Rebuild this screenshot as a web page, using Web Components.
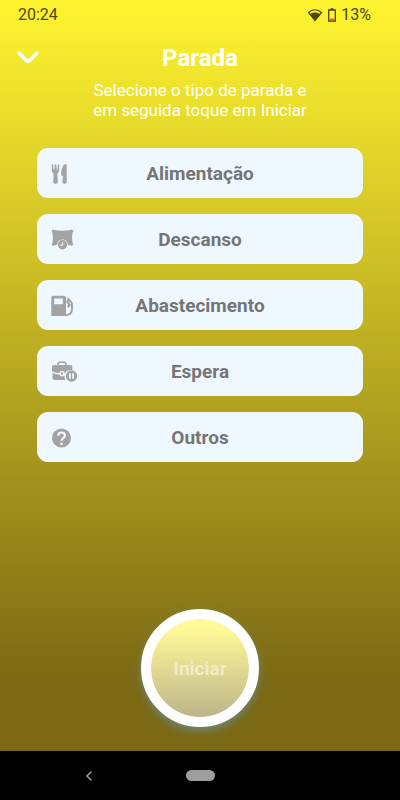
<!DOCTYPE html>
<html lang="pt-BR">
<head>
<meta charset="utf-8">
<meta name="viewport" content="width=device-width, initial-scale=1">
<title>Parada</title>
<style>
  body {
    margin: 0;
    font-family: Roboto, "Liberation Sans", sans-serif;
  }
</style>
</head>
<body>
<stop-screen>
  <status-bar slot="status" data-time="20:24" data-battery="13%"></status-bar>
  <page-header data-title="Parada">Selecione o tipo de parada e<br>em seguida toque em Iniciar</page-header>
  <stop-list>
    <stop-option data-icon="food">Alimentação</stop-option>
    <stop-option data-icon="rest">Descanso</stop-option>
    <stop-option data-icon="fuel">Abastecimento</stop-option>
    <stop-option data-icon="wait">Espera</stop-option>
    <stop-option data-icon="other">Outros</stop-option>
  </stop-list>
  <start-button>Iniciar</start-button>
  <nav-bar slot="nav"></nav-bar>
</stop-screen>

<script>
const icons = {
  food: `
    <path d="M.8 2v5.600c0 1.600.8 2.300 1.800 2.800L2.200 19c0 2.400 4.600 2.400 4.600 0l-.4-8.600c1-.5 1.800-1.200 1.800-2.800V2c0-.9-1.300-.9-1.400 0l-.2 4.500h-.9L5.400 2c0-.9-1.700-.9-1.800 0l-.2 4.500h-1L2.200 2C2.100 1.100.8 1.100.8 2z"/>
    <path d="M15.700 1.600V19c0 2.200-4.300 2.200-4.300 0l.5-5.700c-1.200-.6-2-1.400-1.800-3 .3-4 1.500-8.200 4.400-9.300.7-.3 1.200 0 1.200.6z"/>`,
  rest: `
    <path d="M1 1.500c.7-1 1.500-1.200 2.200-.4 5 1 11.600 1 16.600 0 .7-.8 1.500-.6 2.200.4.600.7.400 1.300-.3 1.700-.8 4-.8 7.500 0 11.200.7.500.8 1.200.2 1.700-.7.800-1.500.8-2.300.1l-2.700-.4C16.300 8.600 6.700 8.600 6.100 15.800l-2.700.4c-.8.700-1.600.7-2.300-.1-.6-.5-.5-1.200.2-1.700.8-3.700.8-7.200 0-11.200C.6 2.800.400 2.200 1 1.500z"/>
    <circle cx="11.500" cy="15.800" r="4.700"/>
    <path d="M11.500 13.200v3H9.200" fill="none" stroke="aliceblue" stroke-width="1.100"/>`,
  fuel: `
    <path fill-rule="evenodd" d="M2 .8h11c1.300 0 2 .7 2 2V21H.3V2.800C.3 1.500.8.800 2 .8zM3.200 3.600v5.700h8.600V3.600z"/>
    <path d="M15 20c3.700 0 6-2.300 6-6V9.500c0-1.100-.3-1.900-1-2.600L16.400 3.300" fill="none" stroke="currentColor" stroke-width="2"/>
    <path d="M17 5l-.4 2.500 2 2.500-2 2.300" fill="none" stroke="currentColor" stroke-width="2.200"/>`,
  wait: `
    <path d="M7 4V3c0-1 .8-1.800 1.800-1.800h4.400C14.200 1.200 15 2 15 3v1" fill="none" stroke="currentColor" stroke-width="1.600"/>
    <path d="M3 4h16c1.500 0 2.300.8 2.300 2v3.200c-3.400-.4-6 .8-7 2.800h-.8c-.2-1.400-1-2-2.500-2s-2.300.6-2.500 2C5.500 11.900 3 11.300 1 10.200V6c0-1.200.7-2 2-2z"/>
    <path d="M1.500 12c2 .9 4.300 1.400 7 1.500.3 1.300 1.200 2 2.500 2s2-.4 2.400-1.200c-.1 1.700.2 3.300 1.200 4.700H3.300c-1.200 0-1.800-.7-1.800-1.700z"/>
    <rect x="10" y="11" width="2" height="3" rx="1"/>
    <circle cx="20.500" cy="15" r="5.700"/>
    <path d="M18.900 12.300v5.400M22.100 12.300v5.400" stroke="aliceblue" stroke-width="1.900"/>`,
  other: `
    <circle cx="10.500" cy="11" r="9.500"/>
    <path d="M7.300 8.700c0-2 1.400-3.200 3.300-3.200s3.300 1.200 3.300 3c0 2.500-3.200 2.600-3.200 5.200" fill="none" stroke="aliceblue" stroke-width="2.200"/>
    <circle cx="10.600" cy="16.800" r="1.400" fill="aliceblue"/>`
};

// Clones the markup of a component into its open shadow root
function attachTemplate(element, html)
{
  const template = document.createElement("template");
  template.innerHTML = html;
  element.attachShadow({mode: "open"}).append(template.content.cloneNode(true));
}

class StopScreen extends HTMLElement
{
  constructor()
  {
    super();

    //language=HTML
    attachTemplate(this, `
      <style>
        :host {
          display: flex;
          flex-direction: column;
          min-height: 100vh;
        }

        main {
          flex: 1;
          display: flex;
          flex-direction: column;
          background: linear-gradient(#fff430, #7b6914 91%);
        }
      </style>
      <main>
        <slot name="status"></slot>
        <slot></slot>
      </main>
      <slot name="nav"></slot>
    `);
  }
}

class StatusBar extends HTMLElement
{
  constructor()
  {
    super();

    //language=HTML
    attachTemplate(this, `
      <style>
        :host {
          display: flex;
          align-items: center;
          justify-content: space-between;
          padding: 5px 29px 5px 18px;
          color: #4c490e;
          font-size: 16px;
          line-height: 20px;
        }

        .battery {
          display: flex;
          align-items: center;
          gap: 5px;
        }
      </style>
      <span>${this.dataset.time}</span>
      <div class="battery">
        <svg width="16" height="14" viewBox="0 0 16 14" aria-hidden="true">
          <path d="M1.500 4.500c4-3.600 9-3.600 13 0L8 12.500z" fill="none" stroke="currentColor" stroke-width="1.200"/>
          <path d="M2.800 6.100c3.200-2.100 7.200-2.100 10.400 0L8 12.500z" fill="currentColor"/>
        </svg>
        <svg width="8" height="14" viewBox="0 0 8 14" aria-hidden="true">
          <path d="M.7 2h6.600v11H.7zM2.500 1h3" fill="none" stroke="currentColor" stroke-width="1.300"/>
          <path d="M1.400 10.500h5.200v2H1.400z" fill="#f0642a"/>
        </svg>
        <span>${this.dataset.battery}</span>
      </div>
    `);
  }
}

class PageHeader extends HTMLElement
{
  constructor()
  {
    super();

    //language=HTML
    attachTemplate(this, `
      <style>
        :host {
          display: block;
          padding: 14px 16px 0;
          color: #fff;
          text-align: center;
        }

        .top {
          display: grid;
          grid-template-columns: 24px 1fr 24px;
          align-items: center;
        }

        button {
          display: flex;
          padding: 0;
          border: 0;
          background: none;
          color: inherit;
          cursor: pointer;
        }

        h1 {
          margin: 0;
          font-size: 24px;
          font-weight: 700;
          line-height: 28px;
        }

        p {
          margin: 8px 0 0;
          font-size: 17px;
          line-height: 20px;
        }
      </style>
      <div class="top">
        <button type="button" aria-label="Fechar">
          <svg width="24" height="16" viewBox="0 0 24 16" aria-hidden="true">
            <path d="M3 3l7.800 7.800q1.200 1.200 2.400 0L21 3" fill="none" stroke="currentColor" stroke-width="3.500" stroke-linecap="round" stroke-linejoin="round"/>
          </svg>
        </button>
        <h1>${this.dataset.title}</h1>
      </div>
      <p><slot></slot></p>
    `);
  }
}

class StopList extends HTMLElement
{
  constructor()
  {
    super();

    //language=HTML
    attachTemplate(this, `
      <style>
        :host {
          display: flex;
          flex-direction: column;
          gap: 16px;
          padding: 28px 37px 0;
        }
      </style>
      <slot></slot>
    `);
  }
}

class StopOption extends HTMLElement
{
  constructor()
  {
    super();

    //language=HTML
    attachTemplate(this, `
      <style>
        :host {
          display: block;
        }

        button {
          display: grid;
          grid-template-columns: 1fr auto 1fr;
          align-items: center;
          width: 100%;
          height: 50px;
          padding: 1px 14px 0;
          border: 0;
          border-radius: 11px;
          background: aliceblue;
          color: #757575;
          font-family: inherit;
          font-size: 19px;
          font-weight: 700;
          line-height: 24px;
          cursor: pointer;
        }

        svg {
          color: #a3a3a3;
        }
      </style>
      <button type="button">
        <svg width="28" height="22" viewBox="0 0 28 22" fill="currentColor" aria-hidden="true">${icons[this.dataset.icon]}</svg>
        <span><slot></slot></span>
      </button>
    `);
  }
}

class StartButton extends HTMLElement
{
  constructor()
  {
    super();

    //language=HTML
    attachTemplate(this, `
      <style>
        :host {
          display: flex;
          justify-content: center;
          margin-top: auto;
          padding: 24px 0;
        }

        button {
          width: 118px;
          height: 118px;
          padding: 0;
          border: 10px solid #fff;
          border-radius: 50%;
          background:
            linear-gradient(#fff997 10%, #bdb489) padding-box,
            linear-gradient(#fff, #fff) border-box;
          box-shadow: 0 4px 8px #6f8577;
          color: #f1ecc9;
          font-family: inherit;
          font-size: 19px;
          font-weight: 700;
        }
      </style>
      <button type="button"><slot></slot></button>
    `);
  }
}

class NavBar extends HTMLElement
{
  constructor()
  {
    super();

    //language=HTML
    attachTemplate(this, `
      <style>
        :host {
          display: grid;
          grid-template-columns: 1fr auto 1fr;
          align-items: center;
          height: 49px;
          background: #000;
          color: #9e9e9e;
        }

        button {
          display: flex;
          padding: 0;
          border: 0;
          background: none;
          color: inherit;
        }

        .back {
          justify-self: center;
          padding-right: 8px;
        }

        .home {
          width: 29px;
          height: 11px;
          border-radius: 6px;
          background: currentColor;
        }
      </style>
      <button class="back" type="button" aria-label="Voltar">
        <svg width="8" height="12" viewBox="0 0 8 12" aria-hidden="true">
          <path d="M6.500 1.500L2 6l4.500 4.500" fill="none" stroke="currentColor" stroke-width="1.500"/>
        </svg>
      </button>
      <button class="home" type="button" aria-label="Início"></button>
    `);
  }
}

customElements.define("stop-screen", StopScreen);
customElements.define("status-bar", StatusBar);
customElements.define("page-header", PageHeader);
customElements.define("stop-list", StopList);
customElements.define("stop-option", StopOption);
customElements.define("start-button", StartButton);
customElements.define("nav-bar", NavBar);
</script>
</body>
</html>
